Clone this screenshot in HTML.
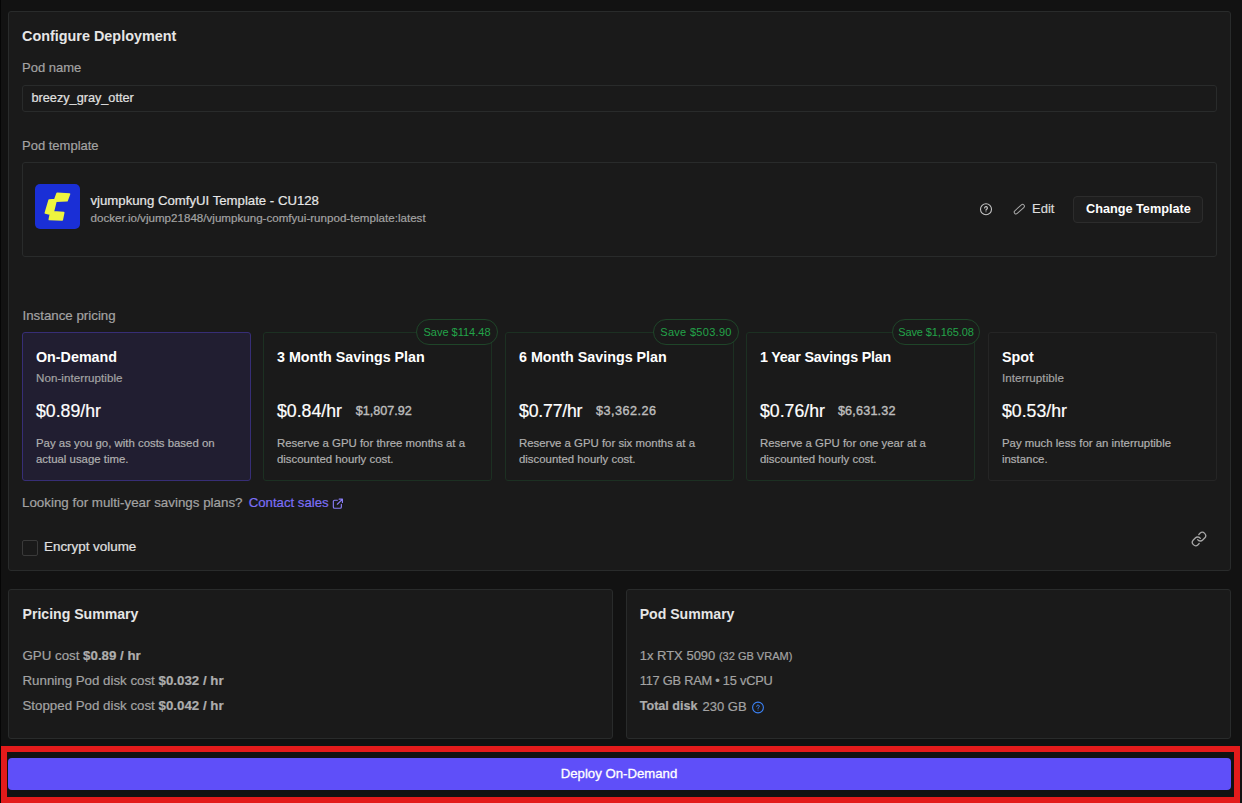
<!DOCTYPE html>
<html><head><meta charset="utf-8"><style>
html,body{margin:0;padding:0;}
body{width:1242px;height:803px;background:#121212;position:relative;overflow:hidden;font-family:"Liberation Sans",sans-serif;}
.t{position:absolute;white-space:nowrap;line-height:1;-webkit-text-stroke:0.2px currentColor;}
.b{position:absolute;box-sizing:border-box;}
svg{position:absolute;}
</style></head><body>
<div class="b" style="left:0;top:0;width:1px;height:803px;background:#050505"></div>
<div class="b" style="left:8px;top:11px;width:1223px;height:560px;background:#1a1a1a;border:1px solid #292b2b;border-radius:3px;"></div>
<div class="t" style="left:22.00px;top:29.01px;font-size:14.4px;color:#e6e6e6;font-weight:700;-webkit-text-stroke:0;">Configure Deployment</div>
<div class="t" style="left:22.00px;top:61.00px;font-size:13px;color:#a3a3a3;font-weight:400;">Pod name</div>
<div class="b" style="left:22px;top:85px;width:1195px;height:27px;background:#1a1a1a;border:1px solid #292b2b;border-radius:3px;"></div>
<div class="t" style="left:31.50px;top:92.05px;font-size:12.7px;color:#e0e0e0;font-weight:400;">breezy_gray_otter</div>
<div class="t" style="left:22.00px;top:139.10px;font-size:13px;color:#a3a3a3;font-weight:400;">Pod template</div>
<div class="b" style="left:22px;top:162px;width:1195px;height:95px;background:#1a1a1a;border:1px solid #292b2b;border-radius:3px;"></div>
<svg style="left:35px;top:184px" width="45" height="45" viewBox="0 0 45 45">
<rect x="0" y="0" width="45" height="45" rx="5" fill="#1a2fd6"/>
<polygon points="22.22,9.43 34.43,10.04 31.97,16.62 20.89,17.03 18.17,27.93 28.61,28.63 27.17,35.78 14.40,35.43 15.45,30.24 10.43,28.96 14.19,16.23 19.95,15.64" fill="#eef53f" stroke="#eef53f" stroke-width="1.8" stroke-linejoin="round"/>
</svg>
<div class="t" style="left:90.50px;top:193.63px;font-size:13.2px;color:#e6e6e6;font-weight:400;">vjumpkung ComfyUI Template - CU128</div>
<div class="t" style="left:90.50px;top:211.98px;font-size:11.6px;color:#a3a3a3;font-weight:400;">docker.io/vjump21848/vjumpkung-comfyui-runpod-template:latest</div>
<svg style="left:979px;top:202px" width="14" height="14" viewBox="0 0 14 14">
<circle cx="7" cy="7.3" r="5.5" fill="none" stroke="#c4c4c4" stroke-width="1.1"/>
<path d="M5.6 6.0 a1.4 1.4 0 1 1 2.0 1.25 c-0.45 0.25 -0.6 0.45 -0.6 0.95" fill="none" stroke="#c4c4c4" stroke-width="1.15" stroke-linecap="round"/>
<circle cx="7" cy="9.7" r="0.5" fill="#c4c4c4"/>
</svg>
<svg style="left:1010px;top:200px" width="18" height="18" viewBox="0 0 18 18">
<rect x="3.1" y="7.35" width="12.4" height="3.6" rx="1.8" transform="rotate(-42 9.3 9.15)" fill="none" stroke="#a8a8a8" stroke-width="1"/>
</svg>
<div class="t" style="left:1032.00px;top:201.90px;font-size:13px;color:#dcdcdc;font-weight:400;">Edit</div>
<div class="b" style="left:1073px;top:196px;width:130px;height:27px;background:#1e1e1e;border:1px solid #2c2c2c;border-radius:4px;"></div>
<div class="t" style="left:1086.00px;top:202.85px;font-size:12.7px;color:#ffffff;font-weight:700;-webkit-text-stroke:0;">Change Template</div>
<div class="t" style="left:22.50px;top:308.94px;font-size:13.3px;color:#a3a3a3;font-weight:400;">Instance pricing</div>
<div class="b" style="left:22px;top:332px;width:229px;height:149px;background:#211e31;border:1px solid #372e76;border-radius:3px"></div>
<div class="t" style="left:36.00px;top:349.90px;font-size:14.3px;color:#ffffff;font-weight:700;-webkit-text-stroke:0;">On-Demand</div>
<div class="t" style="left:36.00px;top:371.98px;font-size:11.6px;color:#a3a3a3;font-weight:400;letter-spacing:0.05px">Non-interruptible</div>
<div class="t" style="left:36.00px;top:402.92px;font-size:17.7px;color:#ffffff;font-weight:400;">$0.89/hr</div>
<div class="t" style="left:36.00px;top:437.75px;font-size:11.4px;color:#b0b0b0;font-weight:400;">Pay as you go, with costs based on</div>
<div class="t" style="left:36.00px;top:453.75px;font-size:11.4px;color:#b0b0b0;font-weight:400;">actual usage time.</div>
<div class="b" style="left:263px;top:332px;width:229px;height:149px;background:#1a1a1a;border:1px solid #1c3022;border-radius:3px"></div>
<div class="t" style="left:277.00px;top:349.90px;font-size:14.3px;color:#ffffff;font-weight:700;-webkit-text-stroke:0;">3 Month Savings Plan</div>
<div class="t" style="left:277.00px;top:402.92px;font-size:17.7px;color:#ffffff;font-weight:400;">$0.84/hr</div>
<div class="t" style="left:355.80px;top:405.33px;font-size:12.6px;color:#bdbdbd;font-weight:400;-webkit-text-stroke:0.4px #bdbdbd;">$1,807.92</div>
<div class="t" style="left:277.00px;top:437.75px;font-size:11.4px;color:#b0b0b0;font-weight:400;">Reserve a GPU for three months at a</div>
<div class="t" style="left:277.00px;top:453.75px;font-size:11.4px;color:#b0b0b0;font-weight:400;">discounted hourly cost.</div>
<div class="b" style="left:416px;top:319px;width:82px;height:26px;background:#1a1a1a;border:1px solid #1f4529;border-radius:13px;font-size:11px;line-height:24px;color:#23a349;white-space:nowrap;text-align:center;letter-spacing:0px">Save $114.48</div>
<div class="b" style="left:505px;top:332px;width:229px;height:149px;background:#1a1a1a;border:1px solid #1c3022;border-radius:3px"></div>
<div class="t" style="left:519.00px;top:349.90px;font-size:14.3px;color:#ffffff;font-weight:700;-webkit-text-stroke:0;">6 Month Savings Plan</div>
<div class="t" style="left:519.00px;top:402.92px;font-size:17.7px;color:#ffffff;font-weight:400;letter-spacing:-0.2px">$0.77/hr</div>
<div class="t" style="left:595.90px;top:405.33px;font-size:12.6px;color:#bdbdbd;font-weight:400;-webkit-text-stroke:0.4px #bdbdbd;letter-spacing:0.5px">$3,362.26</div>
<div class="t" style="left:519.00px;top:437.75px;font-size:11.4px;color:#b0b0b0;font-weight:400;">Reserve a GPU for six months at a</div>
<div class="t" style="left:519.00px;top:453.75px;font-size:11.4px;color:#b0b0b0;font-weight:400;">discounted hourly cost.</div>
<div class="b" style="left:653px;top:319px;width:86px;height:26px;background:#1a1a1a;border:1px solid #1f4529;border-radius:13px;font-size:11px;line-height:24px;color:#23a349;white-space:nowrap;text-align:center;letter-spacing:0.3px">Save $503.90</div>
<div class="b" style="left:746px;top:332px;width:229px;height:149px;background:#1a1a1a;border:1px solid #1c3022;border-radius:3px"></div>
<div class="t" style="left:760.00px;top:349.90px;font-size:14.3px;color:#ffffff;font-weight:700;-webkit-text-stroke:0;letter-spacing:-0.2px">1 Year Savings Plan</div>
<div class="t" style="left:760.00px;top:402.92px;font-size:17.7px;color:#ffffff;font-weight:400;">$0.76/hr</div>
<div class="t" style="left:837.90px;top:405.33px;font-size:12.6px;color:#bdbdbd;font-weight:400;-webkit-text-stroke:0.4px #bdbdbd;letter-spacing:0.2px">$6,631.32</div>
<div class="t" style="left:760.00px;top:437.75px;font-size:11.4px;color:#b0b0b0;font-weight:400;">Reserve a GPU for one year at a</div>
<div class="t" style="left:760.00px;top:453.75px;font-size:11.4px;color:#b0b0b0;font-weight:400;">discounted hourly cost.</div>
<div class="b" style="left:892px;top:319px;width:88px;height:26px;background:#1a1a1a;border:1px solid #1f4529;border-radius:13px;font-size:11px;line-height:24px;color:#23a349;white-space:nowrap;text-align:center;letter-spacing:-0.1px">Save $1,165.08</div>
<div class="b" style="left:988px;top:332px;width:229px;height:149px;background:#1a1a1a;border:1px solid #252525;border-radius:3px"></div>
<div class="t" style="left:1002.00px;top:349.90px;font-size:14.3px;color:#ffffff;font-weight:700;-webkit-text-stroke:0;">Spot</div>
<div class="t" style="left:1002.00px;top:371.98px;font-size:11.6px;color:#a3a3a3;font-weight:400;letter-spacing:0.05px">Interruptible</div>
<div class="t" style="left:1002.00px;top:402.92px;font-size:17.7px;color:#ffffff;font-weight:400;">$0.53/hr</div>
<div class="t" style="left:1002.00px;top:437.75px;font-size:11.4px;color:#b0b0b0;font-weight:400;">Pay much less for an interruptible</div>
<div class="t" style="left:1002.00px;top:453.75px;font-size:11.4px;color:#b0b0b0;font-weight:400;">instance.</div>
<div class="t" style="left:22.00px;top:495.78px;font-size:13.37px;color:#a3a3a3;font-weight:400;">Looking for multi-year savings plans?</div>
<div class="t" style="left:248.70px;top:495.93px;font-size:13.2px;color:#7c6ff7;font-weight:400;">Contact sales</div>
<svg style="left:332.2px;top:497.8px" width="11.6" height="11.6" viewBox="0 0 13 13">
<path d="M6 2.5 H3 a1.5 1.5 0 0 0 -1.5 1.5 V10 a1.5 1.5 0 0 0 1.5 1.5 H9 a1.5 1.5 0 0 0 1.5 -1.5 V7" fill="none" stroke="#887cf4" stroke-width="1.3" stroke-linecap="round"/>
<path d="M6 7 L11.5 1.5 M8 1.3 H11.7 V5" fill="none" stroke="#887cf4" stroke-width="1.3" stroke-linecap="round" stroke-linejoin="round"/>
</svg>
<div class="b" style="left:22px;top:540px;width:16px;height:16px;background:transparent;border:1px solid #3a3a3a;border-radius:2px;"></div>
<div class="t" style="left:44.00px;top:539.66px;font-size:13.4px;color:#e0e0e0;font-weight:400;">Encrypt volume</div>
<svg style="left:1191.3px;top:531.2px" width="16" height="16" viewBox="0 0 24 24">
<path d="M10 13a5 5 0 0 0 7.54.54l3-3a5 5 0 0 0-7.07-7.07l-1.72 1.71" fill="none" stroke="#a8a8a8" stroke-width="1.95" stroke-linecap="round" stroke-linejoin="round"/>
<path d="M14 11a5 5 0 0 0-7.54-.54l-3 3a5 5 0 0 0 7.07 7.07l1.71-1.71" fill="none" stroke="#a8a8a8" stroke-width="1.95" stroke-linecap="round" stroke-linejoin="round"/>
</svg>
<div class="b" style="left:8px;top:589px;width:605px;height:150px;background:#1a1a1a;border:1px solid #292b2b;border-radius:3px;"></div>
<div class="b" style="left:626px;top:589px;width:605px;height:150px;background:#1a1a1a;border:1px solid #292b2b;border-radius:3px;"></div>
<div class="t" style="left:22.50px;top:606.66px;font-size:14.1px;color:#e6e6e6;font-weight:700;-webkit-text-stroke:0;">Pricing Summary</div>
<div class="t" style="left:22.50px;top:648.94px;font-size:13.3px;color:#a3a3a3;font-weight:400;">GPU cost <b style="color:#aeaeae">$0.89 / hr</b></div>
<div class="t" style="left:22.50px;top:673.74px;font-size:13.3px;color:#a3a3a3;font-weight:400;">Running Pod disk cost <b style="color:#aeaeae">$0.032 / hr</b></div>
<div class="t" style="left:22.50px;top:698.54px;font-size:13.3px;color:#a3a3a3;font-weight:400;">Stopped Pod disk cost <b style="color:#aeaeae">$0.042 / hr</b></div>
<div class="t" style="left:639.70px;top:606.66px;font-size:14.1px;color:#e6e6e6;font-weight:700;-webkit-text-stroke:0;">Pod Summary</div>
<div class="t" style="left:639.70px;top:649.20px;font-size:13px;color:#a3a3a3;font-weight:400;">1x RTX 5090 <span style="font-size:11px">(32 GB VRAM)</span></div>
<div class="t" style="left:639.70px;top:674.76px;font-size:12.8px;color:#a3a3a3;font-weight:400;letter-spacing:-0.22px">117 GB RAM • 15 vCPU</div>
<div class="t" style="left:639.70px;top:700.13px;font-size:12.6px;color:#a3a3a3;font-weight:400;"><b style="color:#acacac">Total disk</b></div>
<div class="t" style="left:702.50px;top:699.80px;font-size:13px;color:#a3a3a3;font-weight:400;">230 GB</div>
<svg style="left:751px;top:701px" width="14" height="14" viewBox="0 0 14 14">
<circle cx="7" cy="6.5" r="5.4" fill="none" stroke="#3b82f6" stroke-width="1.1"/>
<path d="M5.7 5.3 a1.3 1.3 0 1 1 1.9 1.2 c-0.45 0.25 -0.6 0.45 -0.6 0.9" fill="none" stroke="#3b82f6" stroke-width="1" stroke-linecap="round"/>
<circle cx="7" cy="9" r="0.5" fill="#3b82f6"/>
</svg>
<div class="b" style="left:1px;top:746px;width:1239px;height:57px;border:6px solid #e31b1b"></div>
<div class="b" style="left:8px;top:758px;width:1223px;height:32px;background:#5f4ff9;border-radius:4px"></div>
<div class="t" style="left:560.70px;top:767.03px;font-size:13.2px;color:#ffffff;font-weight:400;-webkit-text-stroke:0.3px #ffffff">Deploy On-Demand</div>
</body></html>
